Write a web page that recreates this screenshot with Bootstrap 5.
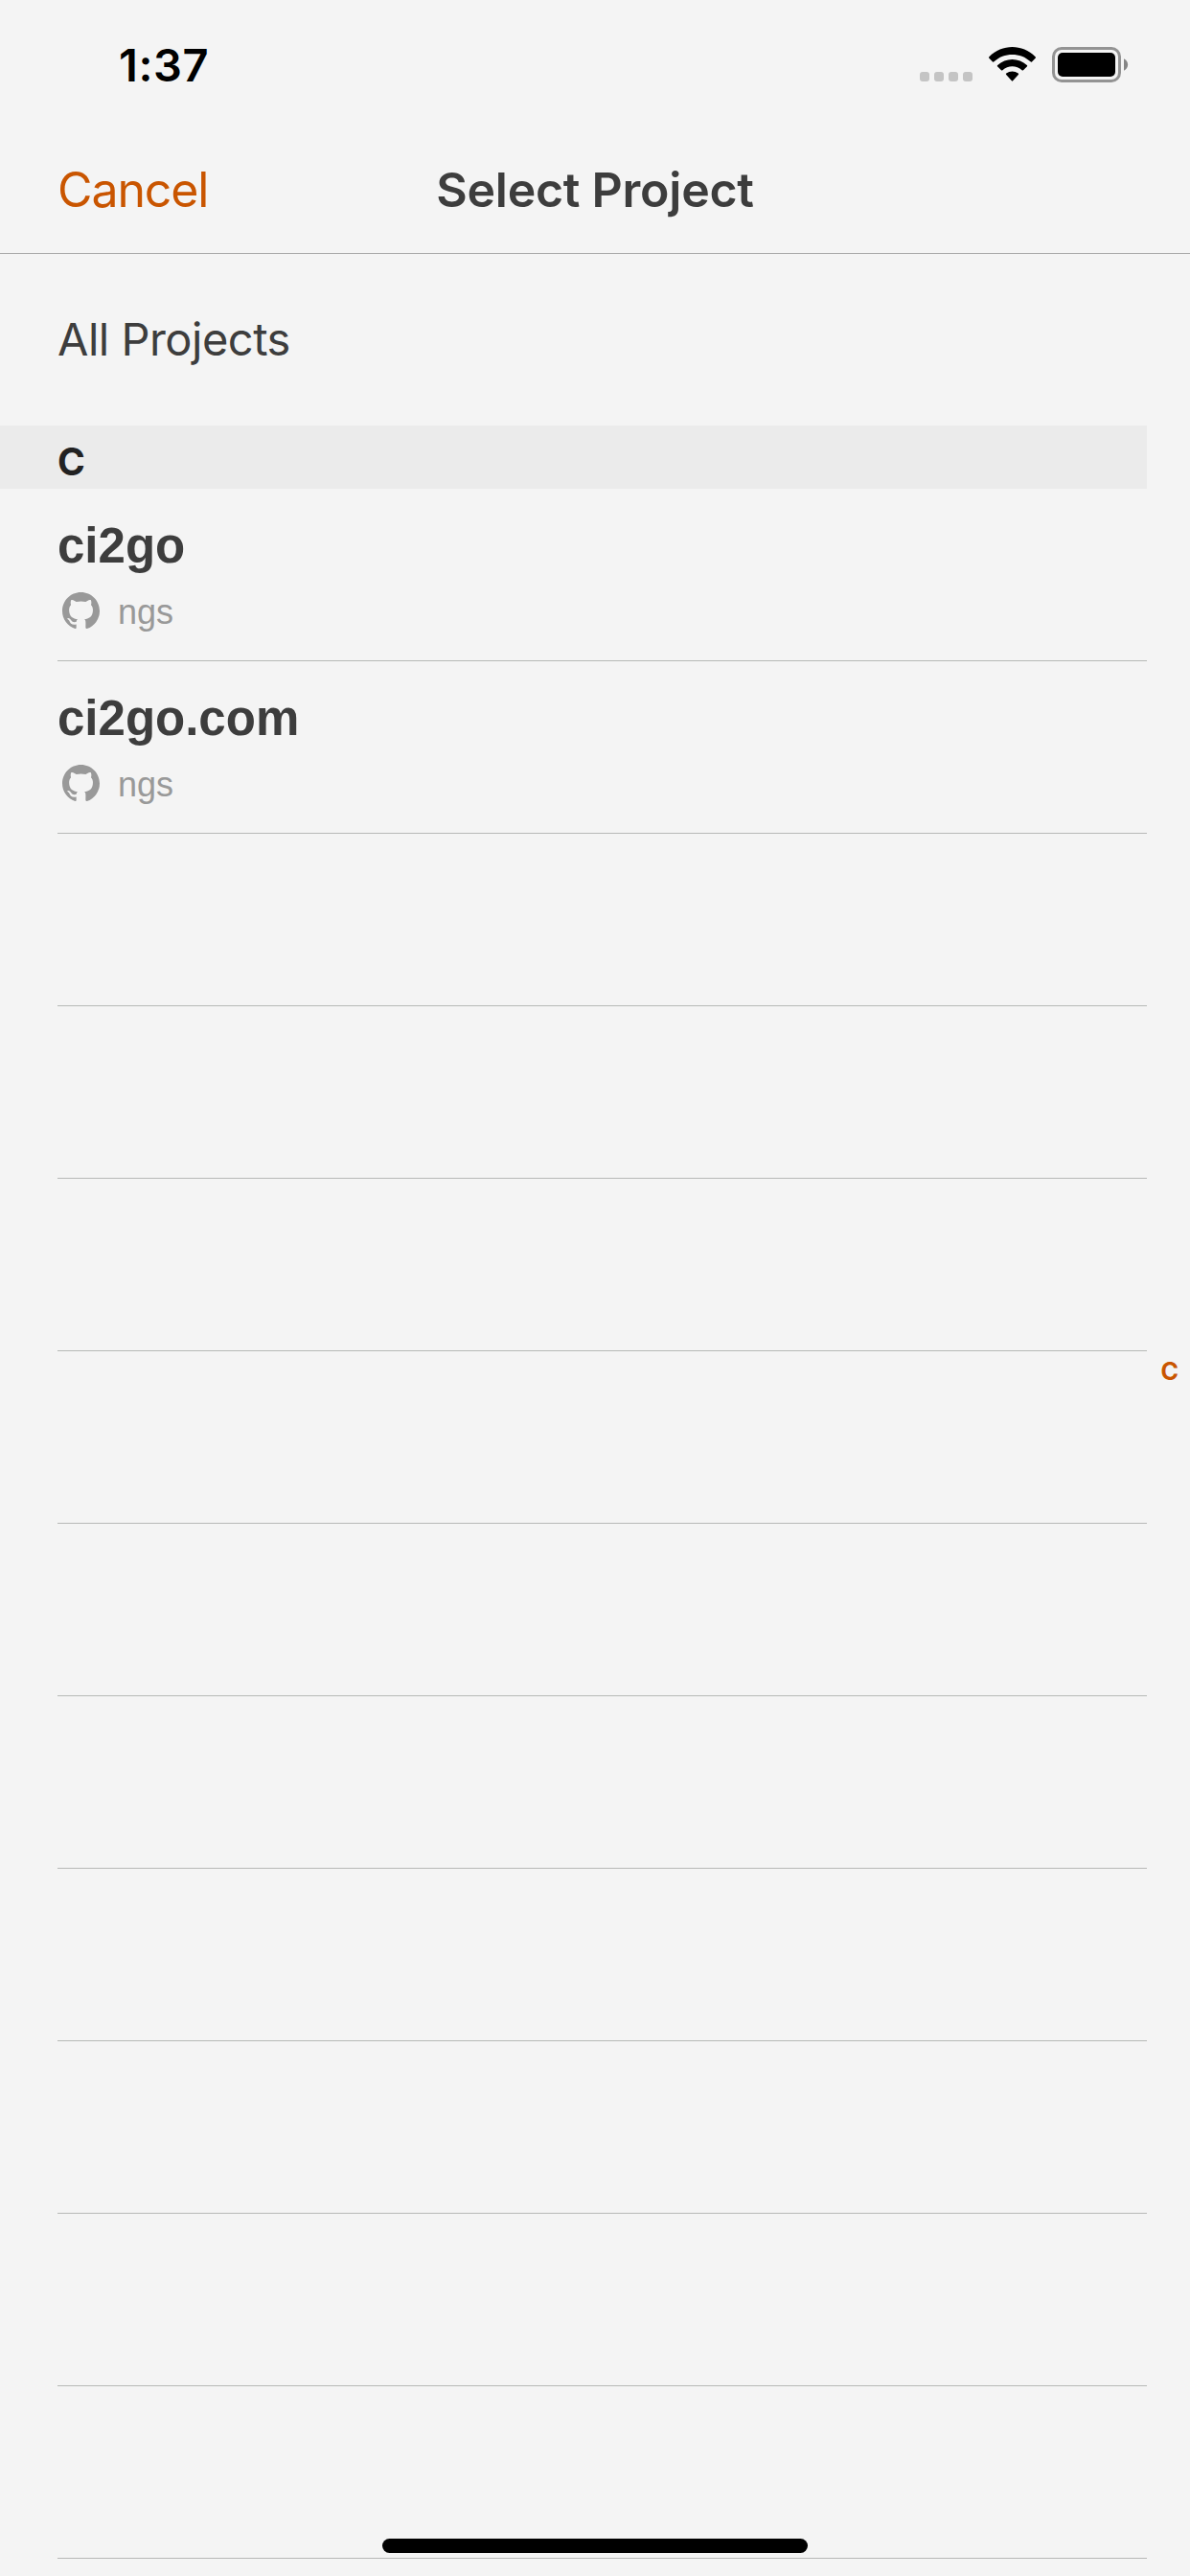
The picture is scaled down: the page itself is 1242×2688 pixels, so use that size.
<!DOCTYPE html>
<html lang="en">
<head>
<meta charset="utf-8">
<meta name="viewport" content="width=device-width, initial-scale=1">
<title>Select Project</title>
<link rel="stylesheet" href="https://cdn.jsdelivr.net/npm/bootstrap@5.3.0/dist/css/bootstrap.min.css">
<style>
  body { background: #f4f4f4; color: #3d3d3d; font-family: Inter, "Liberation Sans", sans-serif; }
  .screen { width: 1242px; height: 2688px; }
  .status-bar { height: 132px; padding: 0 64px 0 124px; }
  .clock { font-size: 47px; line-height: 58px; padding-top: 39px; letter-spacing: .6px; color: #000; }
  .status-icons { padding-top: 49px; }
  .top-nav { height: 133px; border-bottom: 1px solid #a9a9a9; padding: 0 60px; --bs-navbar-padding-y: 0; }
  .nav-side { flex: 1 1 0; }
  .cancel-link { color: #c95500; font-size: 50px; line-height: 60px; letter-spacing: -1.1px; }
  .nav-heading { font-size: 50px; line-height: 60px; letter-spacing: -.25px; }
  .project-list { width: 1197px; --bs-list-group-bg: transparent; }
  .all-row { height: 179px; padding: 0 0 2px 60px; font-size: 47px; line-height: 58px; letter-spacing: -.5px; }
  .section-head { height: 66px; background: #ebebeb; color: #222; padding: 11px 0 0 60px; font-size: 39px; line-height: 54px; }
  .project-row { height: 180px; margin-left: 60px; border-bottom: 1px solid #b7b9b7; padding-top: 30px; font-family: "Liberation Sans", sans-serif; }
  .project-name { font-size: 51px; line-height: 60px; }
  .owner { color: #999; font-size: 36px; line-height: 42px; margin-top: 15px; padding-left: 5px; gap: 19px; }
  .owner-name { padding-top: 3px; }
  .index-letter { right: 12px; top: 1413px; font-size: 25px; line-height: 36px; color: #c95500; }
  .home-bar { left: 399px; top: 2649px; width: 444px; height: 15px; background: #000; }
</style>
</head>
<body>
<div class="screen position-relative overflow-hidden d-flex flex-column">
  <header class="status-bar d-flex justify-content-between align-items-start">
    <div class="clock fw-semibold">1:37</div>
    <div class="status-icons d-flex">
      <svg width="218" height="38" viewBox="960 49 218 38" aria-hidden="true">
        <g fill="#c4c4c4">
          <rect x="960" y="75" width="10" height="10" rx="3"/>
          <rect x="975" y="75" width="10" height="10" rx="3"/>
          <rect x="990" y="75" width="10" height="10" rx="3"/>
          <rect x="1005" y="75" width="10" height="10" rx="3"/>
        </g>
        <path d="M1032.400 59.200Q1031.600 60 1032.400 60.800L1036 64.400Q1036.800 65 1037.500 64.300C1047.600 54.500 1065.400 54.500 1075.500 64.300Q1076.200 65 1077 64.400L1080.600 60.800Q1081.400 60 1080.600 59.200C1067 45.600 1046 45.600 1032.400 59.200ZM1041.200 68Q1040.400 68.800 1041.200 69.600L1045 73.300Q1045.700 73.900 1046.400 73.200C1052 68 1061 68 1066.600 73.200Q1067.300 73.900 1068 73.300L1071.800 69.600Q1072.600 68.800 1071.800 68C1063.400 59.900 1049.600 59.900 1041.200 68ZM1050.200 77.900L1055.900 84.300Q1056.500 85 1057.100 84.300L1062.800 77.900Q1063.600 77 1062.700 76.400C1059 73.700 1054 73.700 1050.300 76.400Q1049.400 77 1050.200 77.900Z"/>
        <rect x="1099.500" y="50.500" width="69" height="34" rx="8.500" fill="none" stroke="#939393" stroke-width="3"/>
        <rect x="1104" y="55" width="60" height="25" rx="5"/>
        <path fill="#858585" d="M1173 61.200C1178.500 63.800 1178.500 71.200 1173 73.800Z"/>
      </svg>
    </div>
  </header>
  <nav class="top-nav navbar flex-nowrap align-items-center">
    <div class="nav-side"><a class="cancel-link text-decoration-none" href="#">Cancel</a></div>
    <h1 class="nav-heading fw-semibold mb-0">Select Project</h1>
    <div class="nav-side"></div>
  </nav>
  <main class="project-list list-group list-group-flush">
    <div class="all-row d-flex align-items-center">All Projects</div>
    <h2 class="section-head fw-bold mb-0">C</h2>
    <div class="project-row">
      <div class="project-name fw-bold">ci2go</div>
      <div class="owner d-flex align-items-center">
        <svg width="39" height="39" viewBox="0 0 16 16" fill="currentColor" aria-hidden="true"><path d="M8 0C3.580 0 0 3.580 0 8c0 3.540 2.290 6.530 5.470 7.590.400.070.550-.170.550-.380 0-.190-.010-.820-.010-1.490-2.010.370-2.530-.490-2.690-.940-.090-.230-.480-.940-.820-1.130-.280-.150-.680-.520-.010-.530.630-.010 1.080.580 1.230.820.720 1.210 1.870.870 2.330.660.070-.520.280-.870.510-1.070-1.780-.200-3.640-.890-3.640-3.950 0-.870.310-1.590.820-2.150-.080-.200-.360-1.020.080-2.120 0 0 .670-.210 2.200.820.640-.180 1.320-.270 2-.270s1.360.090 2 .270c1.530-1.040 2.200-.820 2.200-.820.440 1.100.160 1.920.080 2.120.510.560.820 1.270.820 2.150 0 3.070-1.870 3.750-3.650 3.950.290.250.540.730.540 1.480 0 1.070-.010 1.930-.010 2.200 0 .210.150.460.550.380A8.010 8.010 0 0 0 16 8c0-4.420-3.580-8-8-8Z"/></svg>
        <span class="owner-name">ngs</span>
      </div>
    </div>
    <div class="project-row">
      <div class="project-name fw-bold">ci2go.com</div>
      <div class="owner d-flex align-items-center">
        <svg width="39" height="39" viewBox="0 0 16 16" fill="currentColor" aria-hidden="true"><path d="M8 0C3.580 0 0 3.580 0 8c0 3.540 2.290 6.530 5.470 7.590.400.070.550-.170.550-.380 0-.190-.010-.820-.010-1.490-2.010.370-2.530-.490-2.690-.940-.090-.230-.480-.940-.820-1.130-.280-.150-.680-.520-.010-.530.630-.010 1.080.580 1.230.820.720 1.210 1.870.870 2.330.660.070-.520.280-.870.510-1.070-1.780-.200-3.640-.890-3.640-3.950 0-.870.310-1.590.820-2.150-.080-.200-.360-1.020.080-2.120 0 0 .670-.210 2.200.820.640-.180 1.320-.270 2-.270s1.360.090 2 .270c1.530-1.040 2.200-.820 2.200-.820.440 1.100.160 1.920.080 2.120.510.560.820 1.270.820 2.150 0 3.070-1.870 3.750-3.650 3.950.290.250.540.730.540 1.480 0 1.070-.010 1.930-.010 2.200 0 .210.150.460.550.380A8.010 8.010 0 0 0 16 8c0-4.420-3.580-8-8-8Z"/></svg>
        <span class="owner-name">ngs</span>
      </div>
    </div>
    <div class="project-row"></div>
    <div class="project-row"></div>
    <div class="project-row"></div>
    <div class="project-row"></div>
    <div class="project-row"></div>
    <div class="project-row"></div>
    <div class="project-row"></div>
    <div class="project-row"></div>
    <div class="project-row"></div>
    <div class="project-row"></div>
  </main>
  <div class="index-letter position-absolute fw-bold">C</div>
  <div class="home-bar position-absolute rounded-pill"></div>
</div>
<script src="https://cdn.jsdelivr.net/npm/bootstrap@5.3.0/dist/js/bootstrap.bundle.min.js"></script>
</body>
</html>
